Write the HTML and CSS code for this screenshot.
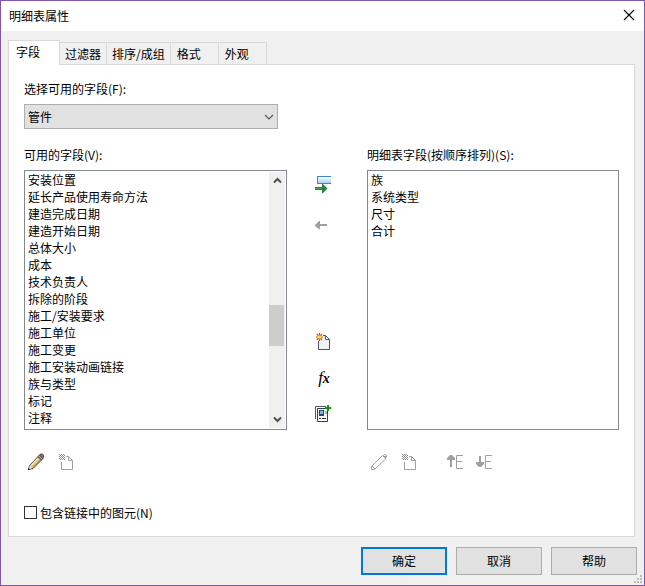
FILE: index.html
```html
<!DOCTYPE html>
<html lang="zh-CN">

<head>
    <meta charset="UTF-8">
    <meta name="viewport" content="width=device-width, initial-scale=1.0">
    <title>明细表属性</title>
    <link rel="stylesheet" href="styles.css">
</head>

<body>
    <form class="dialog">
        <header class="title-bar">
            <h1>明细表属性</h1>
            <button type="button" class="close" aria-label="关闭">
                <svg width="12" height="12" viewBox="0 0 12 12"><path d="M1 1l10 10M11 1L1 11" fill="none" stroke="#000" stroke-width="1.1"/></svg>
            </button>
        </header>

        <nav class="tabs">
            <button type="button" class="tab active">字段</button>
            <button type="button" class="tab">过滤器</button>
            <button type="button" class="tab">排序/成组</button>
            <button type="button" class="tab wide">格式</button>
            <button type="button" class="tab wide">外观</button>
        </nav>

        <main class="panel">
            <label class="caption" for="category">选择可用的字段(F):</label>
            <div class="combo">
                <select id="category">
                    <option>管件</option>
                </select>
                <svg class="chevron" width="10" height="6" viewBox="0 0 10 6"><path d="M1 1l4 4 4-4" fill="none" stroke="#555" stroke-width="1.1"/></svg>
            </div>

            <div class="fields">
                <section>
                    <label class="caption" for="available">可用的字段(V):</label>
                    <div class="list-box">
                        <select id="available" size="15">
                            <option>安装位置</option>
                            <option>延长产品使用寿命方法</option>
                            <option>建造完成日期</option>
                            <option>建造开始日期</option>
                            <option>总体大小</option>
                            <option>成本</option>
                            <option>技术负责人</option>
                            <option>拆除的阶段</option>
                            <option>施工/安装要求</option>
                            <option>施工单位</option>
                            <option>施工变更</option>
                            <option>施工安装动画链接</option>
                            <option>族与类型</option>
                            <option>标记</option>
                            <option>注释</option>
                        </select>
                        <div class="scrollbar">
                            <button type="button" aria-label="向上滚动">
                                <svg width="9" height="7" viewBox="0 0 9 7"><path d="M1 5.500l3.500-3.500 3.500 3.500" fill="none" stroke="#505050" stroke-width="2"/></svg>
                            </button>
                            <div class="track"><div class="thumb"></div></div>
                            <button type="button" aria-label="向下滚动">
                                <svg width="9" height="7" viewBox="0 0 9 7"><path d="M1 1.500l3.500 3.500 3.500-3.500" fill="none" stroke="#505050" stroke-width="2"/></svg>
                            </button>
                        </div>
                    </div>
                    <div class="tools">
                        <button type="button" class="icon" aria-label="编辑">
                            <svg width="18" height="18" viewBox="0 0 18 18">
                                <path d="M1.500 16.500l1-4L12.500 2l3.500 3.500L6 15.500z" fill="#dfc07c" stroke="#3f3f3f"/>
                                <path d="M4 12.500l8-8" stroke="#fae6b0" stroke-width="1.500"/>
                                <path d="M6 14.500l8-8" stroke="#a87d35"/>
                                <path d="M12.500 2l1-1h2l1 1.500v2l-1 1z" fill="#a66358" stroke="#5a4a48"/>
                                <path d="M11 3.500l3.500 3.500" stroke="#53616b" stroke-width="1.500"/>
                                <path d="M2 16l.8-3.500 2.500 2.500z" fill="#e8e8e8"/>
                                <path d="M1 17v-2l2 2z" fill="#222"/>
                            </svg>
                        </button>
                        <button type="button" class="icon" aria-label="删除" disabled>
                            <svg width="18" height="18" viewBox="0 0 18 18">
                                <path d="M3.500 9v7.500h11V7.500l-4-4H8M10.500 3.500v4h4" fill="none" stroke="#a0a0a0"/>
                                <path d="M1 1h1v1H1zM3 1h1v1H3zM5 1h1v1H5zM2 2h1v1H2zM4 2h1v1H4zM6 2h1v1H6zM1 3h1v1H1zM3 3h1v1H3zM5 3h1v1H5zM2 4h1v1H2zM4 4h1v1H4zM6 4h1v1H6zM1 5h1v1H1zM3 5h1v1H3zM5 5h1v1H5zM2 6h1v1H2zM4 6h1v1H4zM6 6h1v1H6z" fill="#888"/>
                            </svg>
                        </button>
                    </div>
                </section>

                <div class="transfer">
                    <button type="button" class="icon" aria-label="添加参数">
                        <svg width="18" height="18" viewBox="0 0 18 18">
                            <defs>
                                <linearGradient id="row" x1="0" y1="0" x2="0" y2="1"><stop offset="0" stop-color="#fff"/><stop offset="1" stop-color="#a9cdec"/></linearGradient>
                            </defs>
                            <path d="M2 0h14v8H2z" fill="#3d87c9"/>
                            <path d="M3 1h13v6H3z" fill="url(#row)"/>
                            <path d="M0 11h7V8h1l4 4v1l-4 4H7v-3H0z" fill="#278339"/>
                            <path d="M0 12h7v1H0z" fill="#4ea45b"/>
                        </svg>
                    </button>
                    <button type="button" class="icon remove" aria-label="删除参数" disabled>
                        <svg width="18" height="18" viewBox="0 0 18 18"><path d="M0 8l4-4h1v3h7v2H5v3H4L0 9z" fill="#a0a0a0"/></svg>
                    </button>
                    <button type="button" class="icon new" aria-label="新建参数">
                        <svg width="18" height="18" viewBox="0 0 18 18">
                            <path d="M3 6v10h11V8l-4-4H6z" fill="#f1f3f5"/>
                            <path d="M3.500 8v8.500h11V6.500l-4-4H8M10.500 2.500v4h4" fill="none" stroke="#4d5863"/>
                            <path d="M4.500 0v8M1 4h7M2 1l5 6M7 1L2 7" stroke="#e04a10" stroke-width="1.200"/>
                            <circle cx="4.500" cy="4" r="1.800" fill="#ffe044"/>
                        </svg>
                    </button>
                    <button type="button" class="icon" aria-label="计算参数">
                        <span class="fx">f<small>x</small></span>
                    </button>
                    <button type="button" class="icon" aria-label="合并参数">
                        <svg width="18" height="18" viewBox="0 0 18 18">
                            <path d="M.5 14V1.500H11" fill="none" stroke="#4d5863"/>
                            <path d="M2.500 3.500h10v13h-10z" fill="#f5f7f8" stroke="#343f4a"/>
                            <path d="M4 5h5v6H4z" fill="#1b4779"/>
                            <path d="M5 6h3v3H5z" fill="#7db7e6"/>
                            <path d="M10 6h2v3h-2z" fill="#a5b2bc"/>
                            <path d="M4 13h2v1H4zM7 13h4v1H7z" fill="#26333e"/>
                            <path d="M12 0h2v2h2v2h-2v2h-2V4h-2V2h2z" fill="#0b990b"/>
                        </svg>
                    </button>
                </div>

                <section>
                    <label class="caption" for="scheduled">明细表字段(按顺序排列)(S):</label>
                    <div class="list-box">
                        <select id="scheduled" size="15">
                            <option>族</option>
                            <option>系统类型</option>
                            <option>尺寸</option>
                            <option>合计</option>
                        </select>
                    </div>
                    <div class="tools">
                        <button type="button" class="icon" aria-label="编辑" disabled>
                            <svg width="18" height="18" viewBox="0 0 18 18">
                                <path d="M1.500 16.500v-3l11-11h1l1-1h1l1 1.500v1l-1 1v1l-11 10.500zM12.500 2.500l3 3M2 13l3 3" fill="none" stroke="#a0a0a0"/>
                                <path d="M14 3h2v2h-2z" fill="#a0a0a0"/>
                            </svg>
                        </button>
                        <button type="button" class="icon" aria-label="删除" disabled>
                            <svg width="18" height="18" viewBox="0 0 18 18">
                                <path d="M3.500 9v7.500h11V7.500l-4-4H8M10.500 3.500v4h4" fill="none" stroke="#a0a0a0"/>
                                <path d="M1 1h1v1H1zM3 1h1v1H3zM5 1h1v1H5zM2 2h1v1H2zM4 2h1v1H4zM6 2h1v1H6zM1 3h1v1H1zM3 3h1v1H3zM5 3h1v1H5zM2 4h1v1H2zM4 4h1v1H4zM6 4h1v1H6zM1 5h1v1H1zM3 5h1v1H3zM5 5h1v1H5zM2 6h1v1H2zM4 6h1v1H4zM6 6h1v1H6z" fill="#888"/>
                            </svg>
                        </button>
                        <button type="button" class="icon move" aria-label="上移" disabled>
                            <svg width="16" height="18" viewBox="0 0 16 18">
                                <path d="M3 2h2l3 3v2H5v7H3V7H0V5z" fill="#a0a0a0"/>
                                <path d="M16 2.500H9.500v13H16M9 8.500h6" fill="none" stroke="#a0a0a0"/>
                            </svg>
                        </button>
                        <button type="button" class="icon" aria-label="下移" disabled>
                            <svg width="18" height="18" viewBox="0 0 18 18">
                                <path d="M3 3h2v6h3v2l-3 3H3l-3-3V9h3z" fill="#a0a0a0"/>
                                <path d="M16 2.500H9.500v13H16M9 8.500h6" fill="none" stroke="#a0a0a0"/>
                            </svg>
                        </button>
                    </div>
                </section>
            </div>

            <div class="check">
                <input type="checkbox" id="linked">
                <label for="linked">包含链接中的图元(N)</label>
            </div>
        </main>

        <footer class="actions">
            <button type="submit" class="btn default">确定</button>
            <button type="button" class="btn">取消</button>
            <button type="button" class="btn">帮助</button>
        </footer>
        <svg class="grip" width="8" height="8" viewBox="0 0 8 8"><path d="M6 0h2v2H6zM3 3h2v2H3zM6 3h2v2H6zM0 6h2v2H0zM3 6h2v2H3zM6 6h2v2H6z" fill="#bcbcbc"/></svg>
    </form>
</body>

</html>
```
FILE: styles.css
```css
* {
    box-sizing: border-box;
}

body {
    margin: 0;
}

body,
button,
select,
input {
    font-family: "Noto Sans CJK SC", sans-serif;
    font-size: 12px;
    line-height: 17px;
    color: #000;
}

button,
select {
    margin: 0;
    padding: 0;
    border: none;
    border-radius: 0;
    background: none;
}

svg {
    display: block;
}

.dialog {
    position: relative;
    display: flex;
    flex-direction: column;
    min-height: 100vh;
    border: 1px solid #7e57a8;
    background: #f0f0f0;
}

.title-bar {
    display: flex;
    align-items: center;
    justify-content: space-between;
    height: 30px;
    padding: 0 9px 2px 8px;
    background: #fff;
}

.title-bar h1 {
    margin: 0;
    font-size: 12px;
    font-weight: normal;
}

.tabs {
    display: flex;
    align-items: flex-end;
    padding: 9px 7px 0;
}

.tab {
    height: 22px;
    padding: 0 5px;
    border: 1px solid #d9d9d9;
    border-bottom: none;
    border-left: none;
}

.tab.wide {
    padding: 0 17px 0 6px;
}

.tab.active {
    height: 25px;
    margin-bottom: -1px;
    padding: 0 19px 4px 7px;
    border-left: 1px solid #d9d9d9;
    background: #fff;
    z-index: 1;
}

.panel {
    flex: 1;
    margin: 0 9px 0 7px;
    padding: 15px 15px 14px;
    border: 1px solid #d9d9d9;
    background: #fff;
}

.caption {
    display: block;
    margin-bottom: 7px;
}

.combo {
    position: relative;
    width: 254px;
}

.combo select {
    display: block;
    width: 100%;
    height: 25px;
    padding: 0 3px 1px;
    border: 1px solid #adadad;
    background: #e1e1e1;
    appearance: none;
}

.chevron {
    position: absolute;
    right: 4px;
    top: 10px;
    pointer-events: none;
}

.fields {
    display: grid;
    grid-template-columns: 263fr 80px 252fr;
    margin-top: 17px;
}

.list-box {
    display: flex;
    height: 260px;
    padding: 0 1px;
    border: 1px solid #828790;
}

.list-box select {
    flex: 1;
    min-width: 0;
    height: 258px;
    overflow: hidden;
    outline: none;
}

.list-box option {
    min-height: 17px;
    padding: 0 2px;
}

.scrollbar {
    display: flex;
    flex-direction: column;
    width: 16px;
    margin: 1px 0;
    background: #f0f0f0;
}

.scrollbar button {
    display: flex;
    align-items: center;
    justify-content: center;
    height: 17px;
}

.track {
    display: flex;
    flex: 1;
    padding-top: 116px;
}

.thumb {
    width: 15px;
    height: 41px;
    background: #cdcdcd;
}

.icon {
    display: block;
    width: 18px;
    height: 18px;
}

.transfer {
    display: flex;
    flex-direction: column;
    gap: 18px;
    padding: 30px 0 0 28px;
}

.transfer .remove {
    margin-top: 5px;
}

.transfer .new {
    margin-top: 80px;
}

.fx {
    display: block;
    font: italic 17px/14px "Liberation Serif", serif;
    text-align: center;
}

.fx small {
    font-size: 14px;
    font-weight: bold;
}

.tools {
    display: flex;
    gap: 13px;
    padding: 23px 0 0 3px;
}

.tools .move {
    width: 16px;
    margin-left: 15px;
}

.check {
    display: flex;
    align-items: center;
    gap: 3px;
    margin-top: 33px;
}

.check input {
    width: 13px;
    height: 13px;
    margin: 0;
    border: 1px solid #333;
    background: #fff;
    appearance: none;
}

.check input:checked {
    background: #0078d7;
}

.actions {
    display: flex;
    justify-content: flex-end;
    gap: 9px;
    padding: 10px 7px;
}

.btn {
    width: 86px;
    height: 28px;
    padding-bottom: 2px;
    border: 1px solid #adadad;
    background: #e1e1e1;
}

.btn.default {
    border: 2px solid #0078d7;
}

.btn:hover {
    background: #e5f1fb;
}

.grip {
    position: absolute;
    right: 2px;
    bottom: 2px;
}
```
